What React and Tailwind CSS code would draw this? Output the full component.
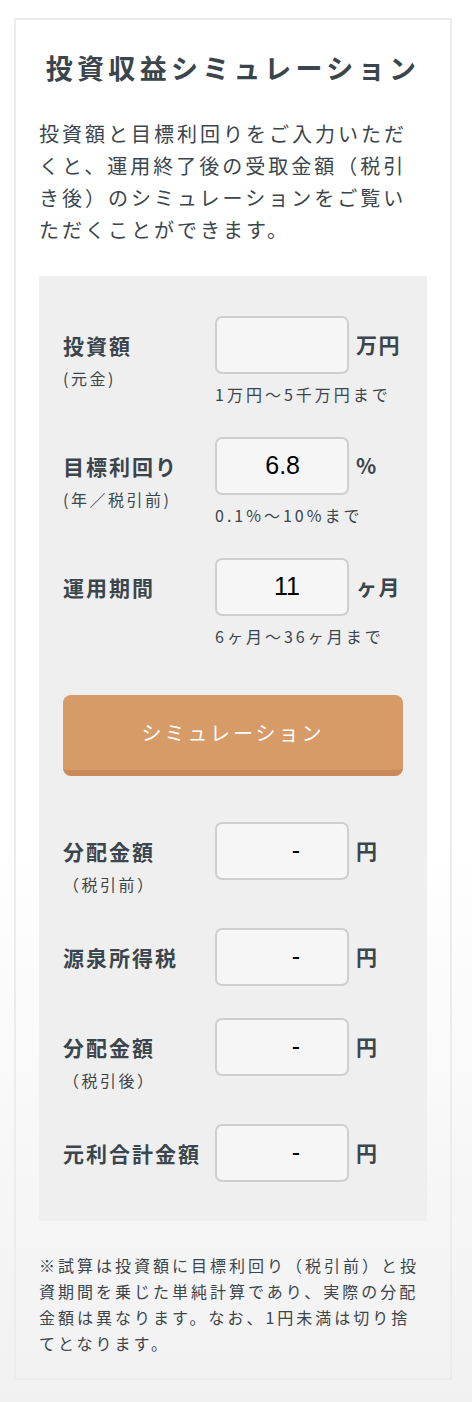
const font = { fontFamily: '"Noto Sans CJK JP", "Noto Sans", sans-serif' };

function Field({ label, sub, value, unit, hint }) {
  return (
    <div className="flex">
      <div className="w-[152px] shrink-0 pt-[15px]">
        <div className="text-[21px] leading-[28px] font-bold tracking-[2px] text-[#3b454c]">{label}</div>
        {sub && (
          <div className="mt-[9px] text-[16px] leading-[20px] tracking-[2.5px] text-[#3b454c]">{sub}</div>
        )}
      </div>
      <div>
        <div className="flex items-center">
          <div className="w-[134px] h-[58px] rounded-[7px] border-2 border-[#cfcfcf] bg-[#f6f6f6] flex items-center justify-end pr-[47px]">
            <span className="text-[25px] text-black" style={{ fontFamily: '"Liberation Sans", Arial, sans-serif' }}>
              {value}
            </span>
          </div>
          <span className="ml-[7px] text-[21px] font-bold tracking-[1.5px] text-[#3b454c]">{unit}</span>
        </div>
        {hint && (
          <div className="mt-[10px] text-[16px] leading-[20px] tracking-[3px] text-[#3b454c]">{hint}</div>
        )}
      </div>
    </div>
  );
}

export default function App() {
  return (
    <div className="min-h-[1402px] bg-gradient-to-b from-white from-60% to-[#f1f1f1] pt-[18px] px-[14px]" style={font}>
      <div className="w-[438px] border-2 border-[#ececec] px-[23px] pt-[30px] pb-[22px]">
        <h1 className="text-center text-[27px] leading-[36px] font-bold tracking-[4.3px] text-[#3b454c]">
          投資収益シミュレーション
        </h1>
        <p className="mt-[32px] text-[20px] leading-[32px] tracking-[3px] text-[#3b454c]">
          投資額と目標利回りをご入力いただくと、運用終了後の受取金額（税引き後）のシミュレーションをご覧いただくことができます。
        </p>

        <div className="mt-[30px] bg-[#efefef] px-[24px] pt-[40px] pb-[39px]">
          <Field label="投資額" sub="(元金)" value="" unit="万円" hint="1万円〜5千万円まで" />
          <div className="mt-[33px]">
            <Field label="目標利回り" sub="(年／税引前)" value="6.8" unit="%" hint="0.1%〜10%まで" />
          </div>
          <div className="mt-[33px]">
            <Field label="運用期間" value="11" unit="ヶ月" hint="6ヶ月〜36ヶ月まで" />
          </div>

          <button className="mt-[49px] w-full h-[81px] rounded-[8px] bg-[#d79b67] border-b-[6px] border-[#c88a58] text-white text-[20px] tracking-[3px]">
            シミュレーション
          </button>

          <div className="mt-[46px]">
            <Field label="分配金額" sub="（税引前）" value="-" unit="円" />
          </div>
          <div className="mt-[34px]">
            <Field label="源泉所得税" value="-" unit="円" />
          </div>
          <div className="mt-[32px]">
            <Field label="分配金額" sub="（税引後）" value="-" unit="円" />
          </div>
          <div className="mt-[34px]">
            <Field label="元利合計金額" value="-" unit="円" />
          </div>
        </div>

        <p className="mt-[31px] text-[16px] leading-[26px] tracking-[3px] text-[#3b454c]">
          ※試算は投資額に目標利回り（税引前）と投資期間を乗じた単純計算であり、実際の分配金額は異なります。なお、1円未満は切り捨てとなります。
        </p>
      </div>
    </div>
  );
}
